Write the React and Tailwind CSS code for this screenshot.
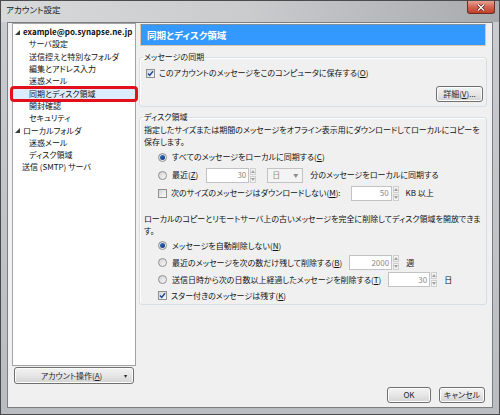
import React from 'react';

const Check = ({ checked }) => (
  <span className="w-[9px] h-[9px] border border-[#8e8f8f] bg-gradient-to-br from-[#d6d6d6] to-[#fbfbfb] flex items-center justify-center shrink-0">
    {checked && (
      <svg width="7" height="7" viewBox="0 0 7 7">
        <path d="M1 3.6 L2.7 5.4 L6 1.2" stroke="#1f4a9c" strokeWidth="1.5" fill="none" />
      </svg>
    )}
  </span>
);

const Radio = ({ checked }) => (
  <span className="w-[9px] h-[9px] rounded-full border border-[#8e8f8f] bg-gradient-to-br from-[#d2d2d2] to-[#fbfbfb] flex items-center justify-center shrink-0">
    {checked && <span className="w-[5px] h-[5px] rounded-full bg-gradient-to-br from-[#3d78c9] to-[#0f2f6e]" />}
  </span>
);

const Arrow = ({ up }) => (
  <svg width="4" height="3" viewBox="0 0 4 3">
    <path d={up ? 'M0 3 L2 0 L4 3 Z' : 'M0 0 L4 0 L2 3 Z'} fill="#a0a0a0" />
  </svg>
);

const Spin = ({ value, w }) => (
  <span className="flex items-stretch h-[15px] shrink-0">
    <span className={`${w} border border-[#c2c2c2] bg-white text-[#8a8a8a] pr-[2px] flex items-center justify-end`}>{value}</span>
    <span className="w-[6px] flex flex-col ml-[1px] gap-[1px]">
      <span className="flex-1 border border-[#cfcfcf] bg-[#f4f4f4] flex items-center justify-center"><Arrow up /></span>
      <span className="flex-1 border border-[#cfcfcf] bg-[#f4f4f4] flex items-center justify-center"><Arrow /></span>
    </span>
  </span>
);

const Btn = ({ children, className = '' }) => (
  <button className={`h-[16px] border border-[#707070] rounded-[3px] bg-gradient-to-b from-[#f3f3f3] via-[#e6e6e6] to-[#d3d3d3] text-[#1e1e1e] flex items-center justify-center shadow-[inset_0_0_0_1px_#fcfcfc] ${className}`}>
    {children}
  </button>
);

const Tri = () => (
  <svg width="5" height="5" viewBox="0 0 5 5" className="shrink-0">
    <path d="M0 5 L5 5 L5 0 Z" fill="#3b3b3b" />
  </svg>
);

const treeChildren = ['サーバ設定', '送信控えと特別なフォルダ', '編集とアドレス入力', '迷惑メール'];
const treeChildren2 = ['開封確認', 'セキュリティ'];

export default function App() {
  return (
    <div className="w-[500px] h-[415px] border border-[#4b4b4b] bg-gradient-to-b from-[#c9cdd1] to-[#b9bdc1] flex flex-col text-[8px] text-[#111] font-['Noto_Sans_CJK_JP','Noto_Sans_CJK_SC',sans-serif] [font-feature-settings:'palt'] overflow-hidden">
      {/* title bar */}
      <div className="h-[21px] flex justify-between items-start bg-gradient-to-r from-[#d7d9db] via-[#c9cbcd] to-[#a8abae]">
        <span className="pl-[5px] pt-[2px] leading-[12px] text-[8.5px] text-[#222]">アカウント設定</span>
        <span className="mr-[4px] w-[28px] h-[13px] rounded-b-[3px] border border-t-0 border-[#6e2c22] bg-gradient-to-b from-[#e6a193] via-[#d26552] to-[#c0402c] flex items-center justify-center">
          <svg width="8" height="7" viewBox="0 0 8 7">
            <path d="M1 0.5 L7 6.5 M7 0.5 L1 6.5" stroke="#4a1c14" strokeWidth="2.6" />
            <path d="M1 0.5 L7 6.5 M7 0.5 L1 6.5" stroke="#fff" strokeWidth="1.4" />
          </svg>
        </span>
      </div>

      {/* client area */}
      <div className="flex-1 mx-[6px] mb-[6px] border border-[#7e7e7e] bg-[#f0f0f0] flex pl-[4px] pr-[5px]">
        {/* left column */}
        <div className="w-[124px] flex flex-col">
          <div className="h-[343px] border border-[#a3a3a3] bg-white pt-[2px]">
            <div className="h-[12.3px] flex items-center gap-[3px] pl-[2px] font-bold">
              <Tri />
              <span>example@po.synapse.ne.jp</span>
            </div>
            {treeChildren.map((t) => (
              <div key={t} className="h-[12.3px] flex items-center pl-[16px]">{t}</div>
            ))}
            <div className="h-[12.3px] flex items-center pl-[16px] relative">
              <span className="absolute left-[-3px] right-[-3px] top-[-1px] bottom-[-2px] rounded-[4px] border-[3px] border-[#e3101c] bg-[#dcecfc]" />
              <span className="relative">同期とディスク領域</span>
            </div>
            {treeChildren2.map((t) => (
              <div key={t} className="h-[12.3px] flex items-center pl-[16px]">{t}</div>
            ))}
            <div className="h-[12.3px] flex items-center gap-[3px] pl-[2px]">
              <Tri />
              <span>ローカルフォルダ</span>
            </div>
            <div className="h-[12.3px] flex items-center pl-[16px]">迷惑メール</div>
            <div className="h-[12.3px] flex items-center pl-[16px]">ディスク領域</div>
            <div className="h-[12.3px] flex items-center pl-[9px]">送信 (SMTP) サーバ</div>
          </div>
          <Btn className="mt-[1px] ml-[2px] w-[120px] h-[17px]">
            <span className="flex-1 text-center pl-[4px]">アカウント操作(<u>A</u>)</span>
            <span className="pr-[6px] text-[6px]">▾</span>
          </Btn>
        </div>

        {/* right column */}
        <div className="ml-[3px] w-[348px] flex flex-col pt-[1px] pb-[4px]">
          <div className="mx-[1px] h-[22px] bg-[#3399ff] border border-[#dcc8a4] border-t-[#8090a0] flex items-center pl-[6px] text-white font-bold text-[9.5px]">
            同期とディスク領域
          </div>

          <fieldset className="mt-[5px] border border-[#d5dfe5] rounded-[3px] pl-[6px] pr-[3px] pb-[4px] shadow-[inset_1px_1px_0_#ffffff]">
            <legend className="-ml-[3px] px-[1px] h-[12px] leading-[12px]">メッセージの同期</legend>
            <div className="mt-[4px] h-[12px] flex items-center gap-[4px]">
              <Check checked />
              <span>このアカウントのメッセージをこのコンピュータに保存する(<u>O</u>)</span>
            </div>
            <div className="mt-[7px] flex justify-end">
              <Btn className="w-[47px]">詳細(<u>V</u>)...</Btn>
            </div>
          </fieldset>

          <fieldset className="mt-[4px] border border-[#d5dfe5] rounded-[3px] pl-[4px] pr-[3px] pb-[1px] shadow-[inset_1px_1px_0_#ffffff]">
            <legend className="-ml-[1px] px-[1px] h-[12px] leading-[12px]">ディスク領域</legend>
            <div className="mt-[1px] leading-[12px]">
              指定したサイズまたは期間のメッセージをオフライン表示用にダウンロードしてローカルにコピーを保存します。
            </div>
            <div className="pl-[14px]">
              <div className="h-[18px] flex items-center gap-[5px]">
                <Radio checked />
                <span>すべてのメッセージをローカルに同期する(<u>C</u>)</span>
              </div>
              <div className="h-[18px] flex items-center gap-[5px]">
                <Radio />
                <span>最近(<u>Z</u>)</span>
                <span className="ml-[3px]"><Spin value="30" w="w-[43px]" /></span>
                <span className="ml-[6px] w-[36px] h-[15px] border border-[#c2c2c2] bg-[#f4f4f4] flex items-center justify-between px-[4px] text-[#8a8a8a]">
                  <span>日</span>
                  <span className="text-[5px]">▼</span>
                </span>
                <span className="ml-[2px]">分のメッセージをローカルに同期する</span>
              </div>
              <div className="h-[18px] flex items-center gap-[4px]">
                <Check />
                <span>次のサイズのメッセージはダウンロードしない(<u>M</u>):</span>
                <span className="ml-[6px]"><Spin value="50" w="w-[41px]" /></span>
                <span className="ml-[3px]">KB 以上</span>
              </div>
            </div>
            <div className="mt-[11px] leading-[12px]">
              ローカルのコピーとリモートサーバ上の古いメッセージを完全に削除してディスク領域を開放できます。
            </div>
            <div className="pl-[14px]">
              <div className="h-[17px] flex items-center gap-[5px]">
                <Radio checked />
                <span>メッセージを自動削除しない(<u>N</u>)</span>
              </div>
              <div className="h-[17px] flex items-center gap-[5px]">
                <Radio />
                <span>最近のメッセージを次の数だけ残して削除する(<u>B</u>)</span>
                <span className="ml-[2px]"><Spin value="2000" w="w-[43px]" /></span>
                <span className="ml-[2px]">週</span>
              </div>
              <div className="h-[17px] flex items-center gap-[5px]">
                <Radio />
                <span>送信日時から次の日数以上経過したメッセージを削除する(<u>T</u>)</span>
                <span className="ml-[2px]"><Spin value="30" w="w-[42px]" /></span>
                <span className="ml-[2px]">日</span>
              </div>
              <div className="h-[15px] flex items-center gap-[4px]">
                <Check checked />
                <span>スター付きのメッセージは残す(<u>K</u>)</span>
              </div>
            </div>
          </fieldset>

          <div className="flex-1" />
          <div className="flex justify-end gap-[8px] pr-[2px]">
            <Btn className="w-[44px] border-[#3c7fb1] shadow-[inset_0_0_0_1px_#c4e5f6]">OK</Btn>
            <Btn className="w-[46px]">キャンセル</Btn>
          </div>
        </div>
      </div>
    </div>
  );
}
